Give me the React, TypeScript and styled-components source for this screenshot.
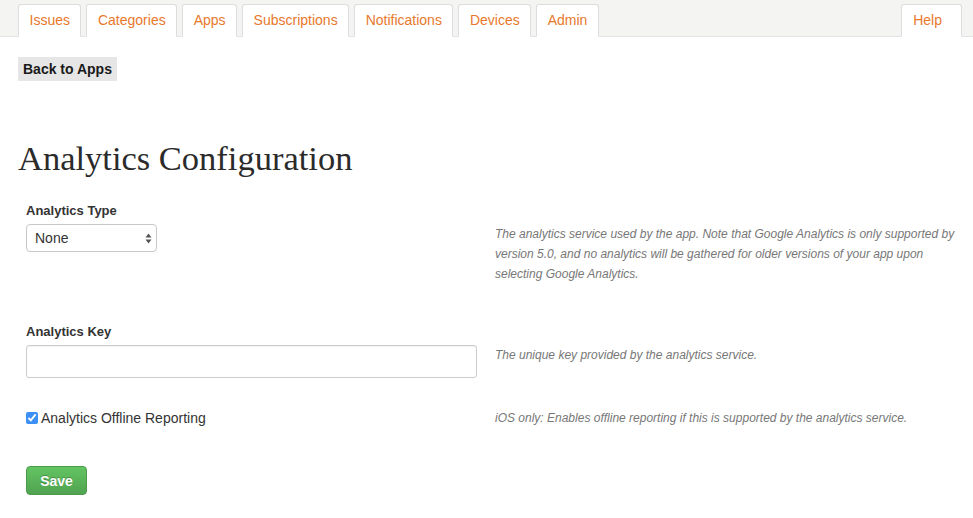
import styled, { createGlobalStyle } from 'styled-components';

const GlobalStyle = createGlobalStyle`
  html, body {
    margin: 0;
    padding: 0;
    background: #ffffff;
    font-family: 'Liberation Sans', Arial, sans-serif;
    color: #333333;
  }
`;

const tabs = ['Issues', 'Categories', 'Apps', 'Subscriptions', 'Notifications', 'Devices', 'Admin'];

export default function App() {
  return (
    <>
      <GlobalStyle />
      <NavBar>
        <TabList>
          {tabs.map((t) => (
            <Tab key={t} href="#">
              {t}
            </Tab>
          ))}
        </TabList>
        <Tab href="#" $wide>
          Help
        </Tab>
      </NavBar>

      <Page>
        <BackButton type="button">Back to Apps</BackButton>
        <Heading>Analytics Configuration</Heading>

        <Form>
          <FieldRow>
            <Field>
              <Label>Analytics Type</Label>
              <SelectWrap>
                <Select defaultValue="none">
                  <option value="none">None</option>
                  <option value="google">Google Analytics</option>
                </Select>
                <SelectArrows width="7" height="11" viewBox="0 0 7 11">
                  <path d="M3.5 0.5 L6.5 4.5 L0.5 4.5 Z" fill="#555" />
                  <path d="M3.5 10.5 L6.5 6.5 L0.5 6.5 Z" fill="#555" />
                </SelectArrows>
              </SelectWrap>
            </Field>
            <Help $offset>
              The analytics service used by the app. Note that Google Analytics is only supported by
              version 5.0, and no analytics will be gathered for older versions of your app upon
              selecting Google Analytics.
            </Help>
          </FieldRow>

          <FieldRow $gap={39}>
            <Field>
              <Label>Analytics Key</Label>
              <TextInput type="text" />
            </Field>
            <Help $offset>The unique key provided by the analytics service.</Help>
          </FieldRow>

          <FieldRow $gap={30}>
            <CheckLabel>
              <input type="checkbox" defaultChecked />
              Analytics Offline Reporting
            </CheckLabel>
            <Help>iOS only: Enables offline reporting if this is supported by the analytics service.</Help>
          </FieldRow>

          <Actions>
            <SaveButton type="button">Save</SaveButton>
          </Actions>
        </Form>
      </Page>
    </>
  );
}

const NavBar = styled.nav`
  display: flex;
  justify-content: space-between;
  align-items: flex-end;
  height: 37px;
  box-sizing: border-box;
  padding: 0 11px 0 18px;
  background-color: #f4f4f3;
  border-bottom: 1px solid #e2e2e2;
`;

const TabList = styled.div`
  display: flex;
  gap: 5px;
`;

const Tab = styled.a<{ $wide?: boolean }>`
  display: flex;
  align-items: center;
  height: 33px;
  box-sizing: border-box;
  padding: 0 ${(p) => (p.$wide ? 19 : 10.5)}px 2px ${(p) => (p.$wide ? 11 : 10.5)}px;
  margin-bottom: -1px;
  background: #ffffff;
  border: 1px solid #dddddd;
  border-bottom: 1px solid #ffffff;
  border-radius: 3px 3px 0 0;
  color: #e8782c;
  font-size: 14px;
  text-decoration: none;
`;

const Page = styled.main`
  padding: 20px 0 0 18px;
`;

const BackButton = styled.button`
  display: block;
  height: 24px;
  padding: 0 5px;
  border: none;
  background: #e6e6e6;
  color: #1a1a1a;
  font-family: 'Liberation Sans', Arial, sans-serif;
  font-size: 14px;
  font-weight: bold;
  cursor: pointer;
`;

const Heading = styled.h1`
  margin: 55px 0 0;
  font-family: 'Liberation Serif', Georgia, serif;
  font-size: 34.5px;
  font-weight: normal;
  line-height: 44px;
  color: #2b2b2b;
`;

const Form = styled.form`
  padding: 22px 0 0 8px;
`;

const FieldRow = styled.div<{ $gap?: number }>`
  display: grid;
  grid-template-columns: 451px 1fr;
  column-gap: 18px;
  margin-top: ${(p) => p.$gap ?? 0}px;
`;

const Field = styled.div`
  display: flex;
  flex-direction: column;
  align-items: flex-start;
`;

const Label = styled.label`
  font-size: 13px;
  font-weight: bold;
  line-height: 18px;
  margin-bottom: 4px;
  color: #333333;
`;

const SelectWrap = styled.div`
  position: relative;
  width: 131px;
`;

const Select = styled.select`
  width: 131px;
  height: 28px;
  padding: 0 20px 0 8px;
  appearance: none;
  background: #ffffff;
  border: 1px solid #c8c8c8;
  border-radius: 4px;
  font-family: 'Liberation Sans', Arial, sans-serif;
  font-size: 14px;
  color: #333333;
`;

const SelectArrows = styled.svg`
  position: absolute;
  right: 5px;
  top: 9px;
  pointer-events: none;
`;

const TextInput = styled.input`
  width: 451px;
  height: 33px;
  box-sizing: border-box;
  margin: 0;
  border: 1px solid #cccccc;
  border-radius: 3px;
  box-shadow: inset 0 1px 1px rgba(0, 0, 0, 0.06);
  font-size: 14px;
  padding: 0 8px;
`;

const Help = styled.p<{ $offset?: boolean }>`
  margin: 0;
  padding-top: ${(p) => (p.$offset ? 22 : 0)}px;
  font-size: 12px;
  font-style: italic;
  line-height: 20px;
  color: #777777;
`;

const CheckLabel = styled.label`
  display: flex;
  align-items: center;
  gap: 3px;
  height: 20px;
  font-size: 14px;
  color: #333333;

  input {
    margin: 0;
    width: 12px;
    height: 12px;
    accent-color: #3b8ff5;
  }
`;

const Actions = styled.div`
  margin-top: 38px;
`;

const SaveButton = styled.button`
  width: 61px;
  height: 29px;
  border: 1px solid #4a9a4a;
  border-radius: 4px;
  background: linear-gradient(#62c462, #51a351);
  color: #ffffff;
  font-family: 'Liberation Sans', Arial, sans-serif;
  font-size: 14px;
  font-weight: bold;
  text-shadow: 0 -1px 0 rgba(0, 0, 0, 0.25);
  cursor: pointer;
`;
